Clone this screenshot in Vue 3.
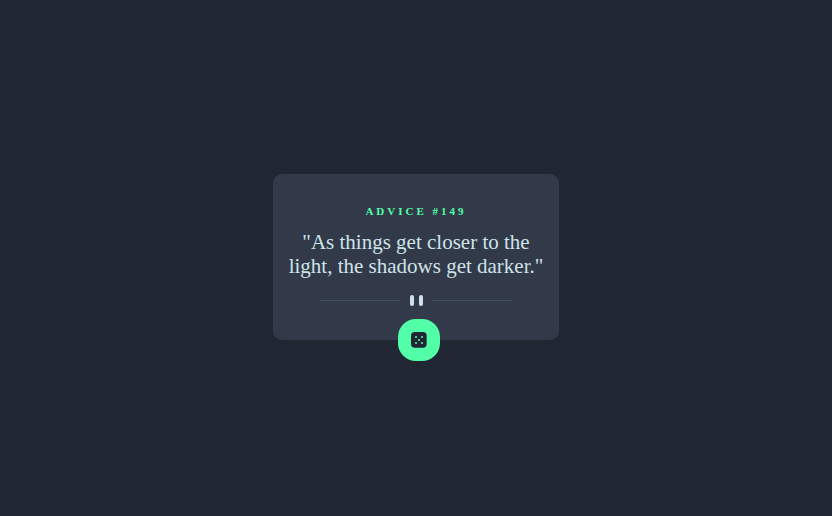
<script setup>
import { ref } from 'vue'

const advice = ref({
  id: 149,
  text: 'As things get closer to the light, the shadows get darker.',
})
</script>

<template>
  <main class="page">
    <article class="card">
      <h1 class="label">ADVICE #{{ advice.id }}</h1>
      <p class="quote">"{{ advice.text }}"</p>
      <svg class="divider" viewBox="0 0 192 11" aria-hidden="true">
        <path d="M0 5h80v1H0zM112 5h80v1h-80z" fill="#434e5d" />
        <rect x="90" width="4" height="11" rx="2" fill="#cee3e9" />
        <rect x="99" width="4" height="11" rx="2" fill="#cee3e9" />
      </svg>
      <button class="dice" type="button" aria-label="New advice">
        <svg class="dice-icon" viewBox="0 0 24 24" aria-hidden="true">
          <rect width="23.500" height="23.500" rx="5.500" fill="#202733" />
          <g fill="#52ffa8">
            <circle cx="7.500" cy="7.500" r="1.500" />
            <circle cx="16.500" cy="7.500" r="1.500" />
            <circle cx="12" cy="12" r="1.500" />
            <circle cx="7.500" cy="16.500" r="1.500" />
            <circle cx="16.500" cy="16.500" r="1.500" />
          </g>
        </svg>
      </button>
    </article>
  </main>
</template>

<style>
body {
  background: #202632;
}
</style>

<style scoped>
.page {
  box-sizing: border-box;
  min-height: 100vh;
  padding-bottom: 2px;
  display: grid;
  place-items: center;
  font-family: "Liberation Serif", "Times New Roman", serif;
}

.card {
  position: relative;
  box-sizing: border-box;
  width: 100%;
  max-width: 286px;
  padding: 31px 12px 34px;
  border-radius: 9px;
  background: #323a49;
  display: flex;
  flex-direction: column;
  align-items: center;
  text-align: center;
}

.label {
  margin: 0;
  color: #52ffa8;
  font-size: 11px;
  line-height: 12px;
  letter-spacing: 3px;
}

.quote {
  margin: 13px 0 17px;
  color: #cee3e9;
  font-size: 21px;
  line-height: 24px;
}

.divider {
  width: 192px;
  height: 11px;
}

.dice {
  position: absolute;
  bottom: -21px;
  left: 50%;
  margin-left: -18px;
  width: 42px;
  height: 42px;
  padding: 0;
  border: 0;
  border-radius: 18px;
  background: #52ffa8;
  display: grid;
  place-items: center;
  cursor: pointer;
}

.dice-icon {
  width: 16px;
  height: 16px;
}
</style>
